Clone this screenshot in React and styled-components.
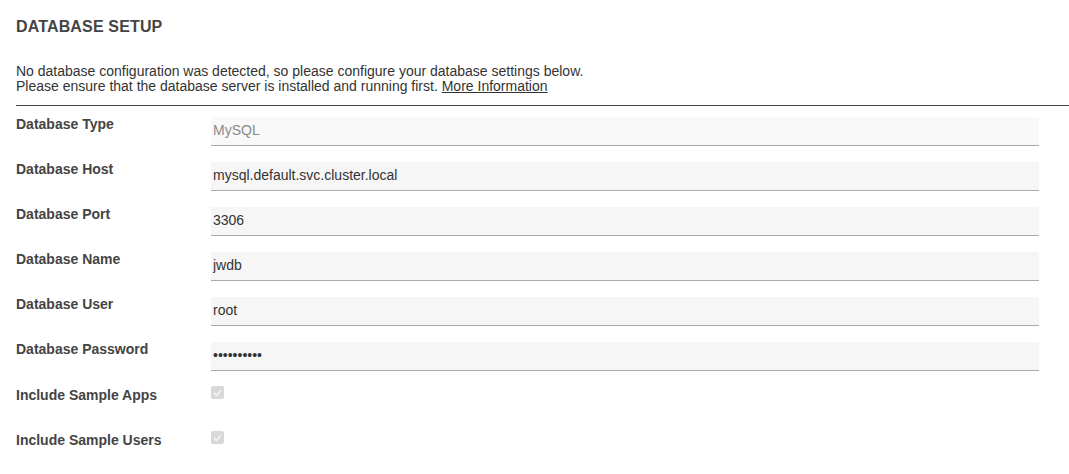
import React from 'react';
import styled, { createGlobalStyle } from 'styled-components';

const GlobalStyle = createGlobalStyle`
  html, body {
    margin: 0;
    padding: 0;
    background: #ffffff;
    font-family: "Liberation Sans", Arial, sans-serif;
    color: #333;
  }
`;

const Page = styled.div`
  padding: 18px 0 0 16px;
`;

const Title = styled.h1`
  margin: 0;
  font-size: 16px;
  line-height: 18px;
  font-weight: 700;
  color: #444;
  text-transform: uppercase;
  letter-spacing: 0.15px;
`;

const Intro = styled.p`
  margin: 28px 0 0;
  font-size: 14px;
  line-height: 15px;
  color: #333;

  a {
    color: #333;
    text-decoration: underline;
  }
`;

const Divider = styled.hr`
  margin: 11px 0 0;
  border: none;
  border-top: 1px solid #444;
  height: 0;
`;

const Form = styled.div`
  display: flex;
  flex-direction: column;
  padding-top: 11px;
`;

const Row = styled.div`
  display: grid;
  grid-template-columns: 195px 828px;
  align-items: start;
  height: 45px;
`;

const Label = styled.label`
  font-size: 14px;
  line-height: 14px;
  font-weight: 700;
  color: #444;
  padding-top: ${(p) => (p.$check ? '1px' : '0')};
`;

const Input = styled.input`
  box-sizing: border-box;
  width: 100%;
  height: 29px;
  margin: 0;
  padding: 0 2px 3px;
  border: none;
  border-bottom: 1px solid #a9a9a9;
  border-radius: 0;
  background: ${(p) => (p.disabled ? '#f9f9f9' : '#f6f6f6')};
  font-family: "Liberation Sans", Arial, sans-serif;
  font-size: 14px;
  color: ${(p) => (p.disabled ? '#8a8a8a' : '#333')};
  outline: none;
`;

const CheckCell = styled.div`
  display: flex;
  margin-top: -1px;
`;

const CheckBox = styled.span`
  display: flex;
  align-items: center;
  justify-content: center;
  width: 13px;
  height: 13px;
  border-radius: 2px;
  background: #d8d8d8;
`;

const fields = [
  { label: 'Database Type', value: 'MySQL', disabled: true },
  { label: 'Database Host', value: 'mysql.default.svc.cluster.local' },
  { label: 'Database Port', value: '3306' },
  { label: 'Database Name', value: 'jwdb' },
  { label: 'Database User', value: 'root' },
  { label: 'Database Password', value: 'password12', type: 'password' },
];

const checks = ['Include Sample Apps', 'Include Sample Users'];

const Check = () => (
  <CheckBox>
    <svg width="9" height="8" viewBox="0 0 9 8">
      <path d="M1 4.2 L3.4 6.5 L8 1.2" fill="none" stroke="#f4f4f4" strokeWidth="1.6" />
    </svg>
  </CheckBox>
);

const App = () => (
  <>
    <GlobalStyle />
    <Page>
      <Title>Database Setup</Title>
      <Intro>
        No database configuration was detected, so please configure your database settings below.
        <br />
        Please ensure that the database server is installed and running first. <a href="#">More Information</a>
      </Intro>
      <Divider />
      <Form>
        {fields.map((f) => (
          <Row key={f.label}>
            <Label>{f.label}</Label>
            <Input
              type={f.type || 'text'}
              defaultValue={f.value}
              disabled={f.disabled}
              readOnly
            />
          </Row>
        ))}
        {checks.map((c) => (
          <Row key={c}>
            <Label $check>{c}</Label>
            <CheckCell>
              <Check />
            </CheckCell>
          </Row>
        ))}
      </Form>
    </Page>
  </>
);

export default App;
